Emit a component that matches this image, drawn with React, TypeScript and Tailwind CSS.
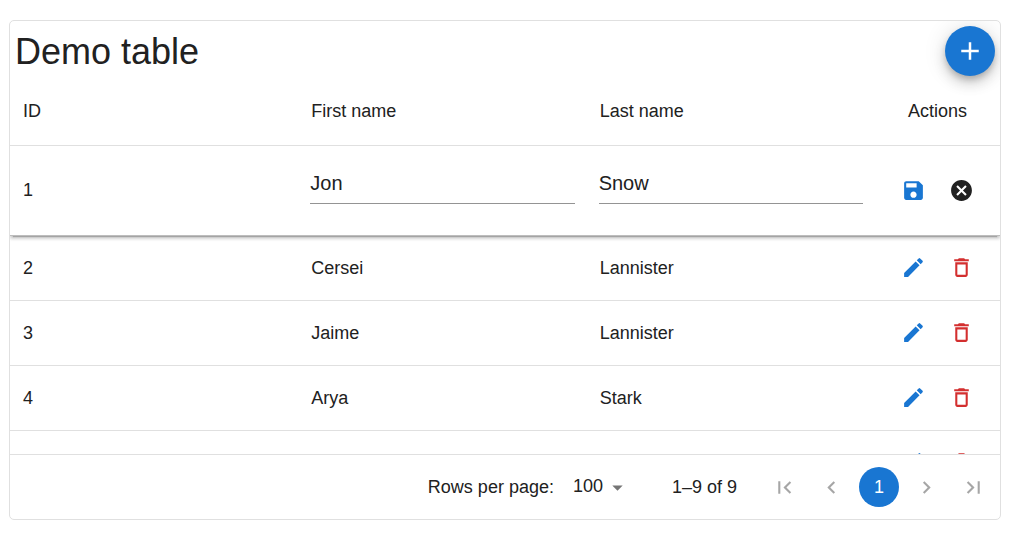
import { useState } from "react";
import type { ReactNode } from "react";

type Person = { id: number; first: string; last: string };

const people: Person[] = [
  { id: 1, first: "Jon", last: "Snow" },
  { id: 2, first: "Cersei", last: "Lannister" },
  { id: 3, first: "Jaime", last: "Lannister" },
  { id: 4, first: "Arya", last: "Stark" },
  { id: 5, first: "Daenerys", last: "Targaryen" },
];

const icons = {
  add: "M19 13h-6v6h-2v-6H5v-2h6V5h2v6h6v2z",
  save: "M17 3H5c-1.11 0-2 .9-2 2v14c0 1.1.89 2 2 2h14c1.1 0 2-.9 2-2V7l-4-4zm-5 16c-1.66 0-3-1.34-3-3s1.34-3 3-3 3 1.34 3 3-1.34 3-3 3zm3-10H5V5h10v4z",
  cancel:
    "M12 2C6.47 2 2 6.47 2 12s4.47 10 10 10 10-4.47 10-10S17.53 2 12 2zm5 13.59L15.59 17 12 13.41 8.41 17 7 15.59 10.59 12 7 8.41 8.41 7 12 10.59 15.59 7 17 8.41 13.41 12 17 15.59z",
  edit: "M3 17.25V21h3.75L17.81 9.94l-3.75-3.75L3 17.25zM20.71 7.04c.39-.39.39-1.02 0-1.41l-2.34-2.34a.9959.9959 0 0 0-1.41 0l-1.83 1.83 3.75 3.75 1.83-1.83z",
  remove:
    "M6 19c0 1.1.9 2 2 2h8c1.1 0 2-.9 2-2V7H6v12zM8 9h8v10H8V9zm7.5-5-1-1h-5l-1 1H5v2h14V4z",
  first: "M18.41 16.59L13.82 12l4.59-4.59L17 6l-6 6 6 6zM6 6h2v12H6z",
  prev: "M15.41 7.41L14 6l-6 6 6 6 1.41-1.41L10.83 12z",
  next: "M10 6L8.59 7.41 13.17 12l-4.58 4.59L10 18l6-6z",
  last: "M5.59 7.41L10.18 12l-4.59 4.59L7 18l6-6-6-6zM16 6h2v12h-2z",
  down: "M7 10l5 5 5-5z",
};

function Icon({ name, className = "size-[25px]" }: { name: keyof typeof icons; className?: string }) {
  return (
    <svg viewBox="0 0 24 24" fill="currentColor" aria-hidden="true" className={className}>
      <path d={icons[name]} />
    </svg>
  );
}

function ActionButton({ label, className, children }: { label: string; className: string; children: ReactNode }) {
  return (
    <button
      type="button"
      aria-label={label}
      className={`flex size-10 items-center justify-center rounded-full hover:bg-black/5 ${className}`}
    >
      {children}
    </button>
  );
}

function PageButton({ label, icon }: { label: string; icon: keyof typeof icons }) {
  return (
    <button type="button" aria-label={label} disabled className="flex h-10 w-[39px] items-center justify-center text-[#a6a6a6]">
      <Icon name={icon} />
    </button>
  );
}

function EditField({ label, initial }: { label: string; initial: string }) {
  const [value, setValue] = useState(initial);
  return (
    <input
      type="text"
      aria-label={label}
      value={value}
      onChange={(e) => setValue(e.target.value)}
      className="mb-2 block h-[37px] w-full rounded-none border-b border-[#949494] bg-transparent pb-1 text-xl outline-none focus:border-[#1976d2]"
    />
  );
}

export default function App() {
  return (
    <main className="bg-white pt-5 pr-[19px] pb-5 pl-[9px] font-['Liberation_Sans',Arial,sans-serif] text-lg text-[#212121]">
      <section className="overflow-hidden rounded-[5px] border border-[#e0e0e0]">
        <header className="flex items-center justify-between p-[5px]">
          <h1 className="pt-[2px] text-4xl">Demo table</h1>
          <button
            type="button"
            aria-label="Add row"
            className="flex size-[50px] items-center justify-center rounded-full bg-[#1976d2] text-white shadow-[0_4px_6px_-1px_rgba(0,0,0,0.2),0_8px_13px_0_rgba(0,0,0,0.14),0_1px_23px_0_rgba(0,0,0,0.12)]"
          >
            <Icon name="add" className="size-[30px]" />
          </button>
        </header>
        <div className="relative max-h-[373px] overflow-y-auto [scrollbar-width:none]">
          <table className="w-full table-fixed border-separate border-spacing-0 text-left">
            <thead>
              <tr className="h-[65px]">
                <th className="border-b border-[#e0e0e0] px-[13px] pb-1 font-normal">ID</th>
                <th className="border-b border-[#e0e0e0] px-[13px] pb-1 font-normal">First name</th>
                <th className="border-b border-[#e0e0e0] px-[13px] pb-1 font-normal">Last name</th>
                <th className="w-[125px] border-b border-[#e0e0e0] px-[13px] pb-1 text-center font-normal">Actions</th>
              </tr>
            </thead>
            <tbody>
              {people.map((p) =>
                p.id === 1 ? (
                  <tr
                    key={p.id}
                    className="relative z-10 h-[90px] shadow-[0_4px_1px_-3px_rgba(0,0,0,0.2),0_3px_3px_0_rgba(0,0,0,0.14),0_1px_4px_0_rgba(0,0,0,0.12)] [clip-path:inset(0_0_-8px_0)]"
                  >
                    <td className="border-b border-[#bdbdbd] px-[13px] pb-[2px]">{p.id}</td>
                    <td className="border-b border-[#bdbdbd] px-3 pb-[2px]">
                      <EditField label="First name" initial={p.first} />
                    </td>
                    <td className="border-b border-[#bdbdbd] px-3 pb-[2px]">
                      <EditField label="Last name" initial={p.last} />
                    </td>
                    <td className="border-b border-[#bdbdbd]">
                      <div className="flex justify-center gap-2">
                        <ActionButton label="Save" className="text-[#1976d2]">
                          <Icon name="save" />
                        </ActionButton>
                        <ActionButton label="Cancel" className="text-[#212121]">
                          <Icon name="cancel" />
                        </ActionButton>
                      </div>
                    </td>
                  </tr>
                ) : (
                  <tr key={p.id} className="h-[65px]">
                    <td className="border-b border-[#e0e0e0] px-[13px]">{p.id}</td>
                    <td className="border-b border-[#e0e0e0] px-[13px]">{p.first}</td>
                    <td className="border-b border-[#e0e0e0] px-[13px]">{p.last}</td>
                    <td className="border-b border-[#e0e0e0] pb-[2px]">
                      <div className="flex justify-center gap-2">
                        <ActionButton label="Edit" className="text-[#1976d2]">
                          <Icon name="edit" />
                        </ActionButton>
                        <ActionButton label="Delete" className="text-[#d32f2f]">
                          <Icon name="remove" />
                        </ActionButton>
                      </div>
                    </td>
                  </tr>
                ),
              )}
            </tbody>
          </table>
        </div>
        <footer className="flex h-[65px] items-center justify-end border-t border-[#e0e0e0] pr-[7px]">
          <label htmlFor="page-size">Rows per page:</label>
          <div className="ml-[19px] grid items-center">
            <select
              id="page-size"
              defaultValue="100"
              className="col-start-1 row-start-1 appearance-none bg-transparent pr-[30px] pb-[2px] outline-none"
            >
              <option value="25">25</option>
              <option value="50">50</option>
              <option value="100">100</option>
            </select>
            <span className="pointer-events-none col-start-1 row-start-1 justify-self-end pr-1 text-[#757575]">
              <Icon name="down" />
            </span>
          </div>
          <p className="ml-[38px]">1–9 of 9</p>
          <nav aria-label="Pagination" className="ml-7 flex gap-2">
            <PageButton label="First page" icon="first" />
            <PageButton label="Previous page" icon="prev" />
            <button type="button" aria-current="page" className="size-10 rounded-full bg-[#1976d2] text-white">
              1
            </button>
            <PageButton label="Next page" icon="next" />
            <PageButton label="Last page" icon="last" />
          </nav>
        </footer>
      </section>
    </main>
  );
}
